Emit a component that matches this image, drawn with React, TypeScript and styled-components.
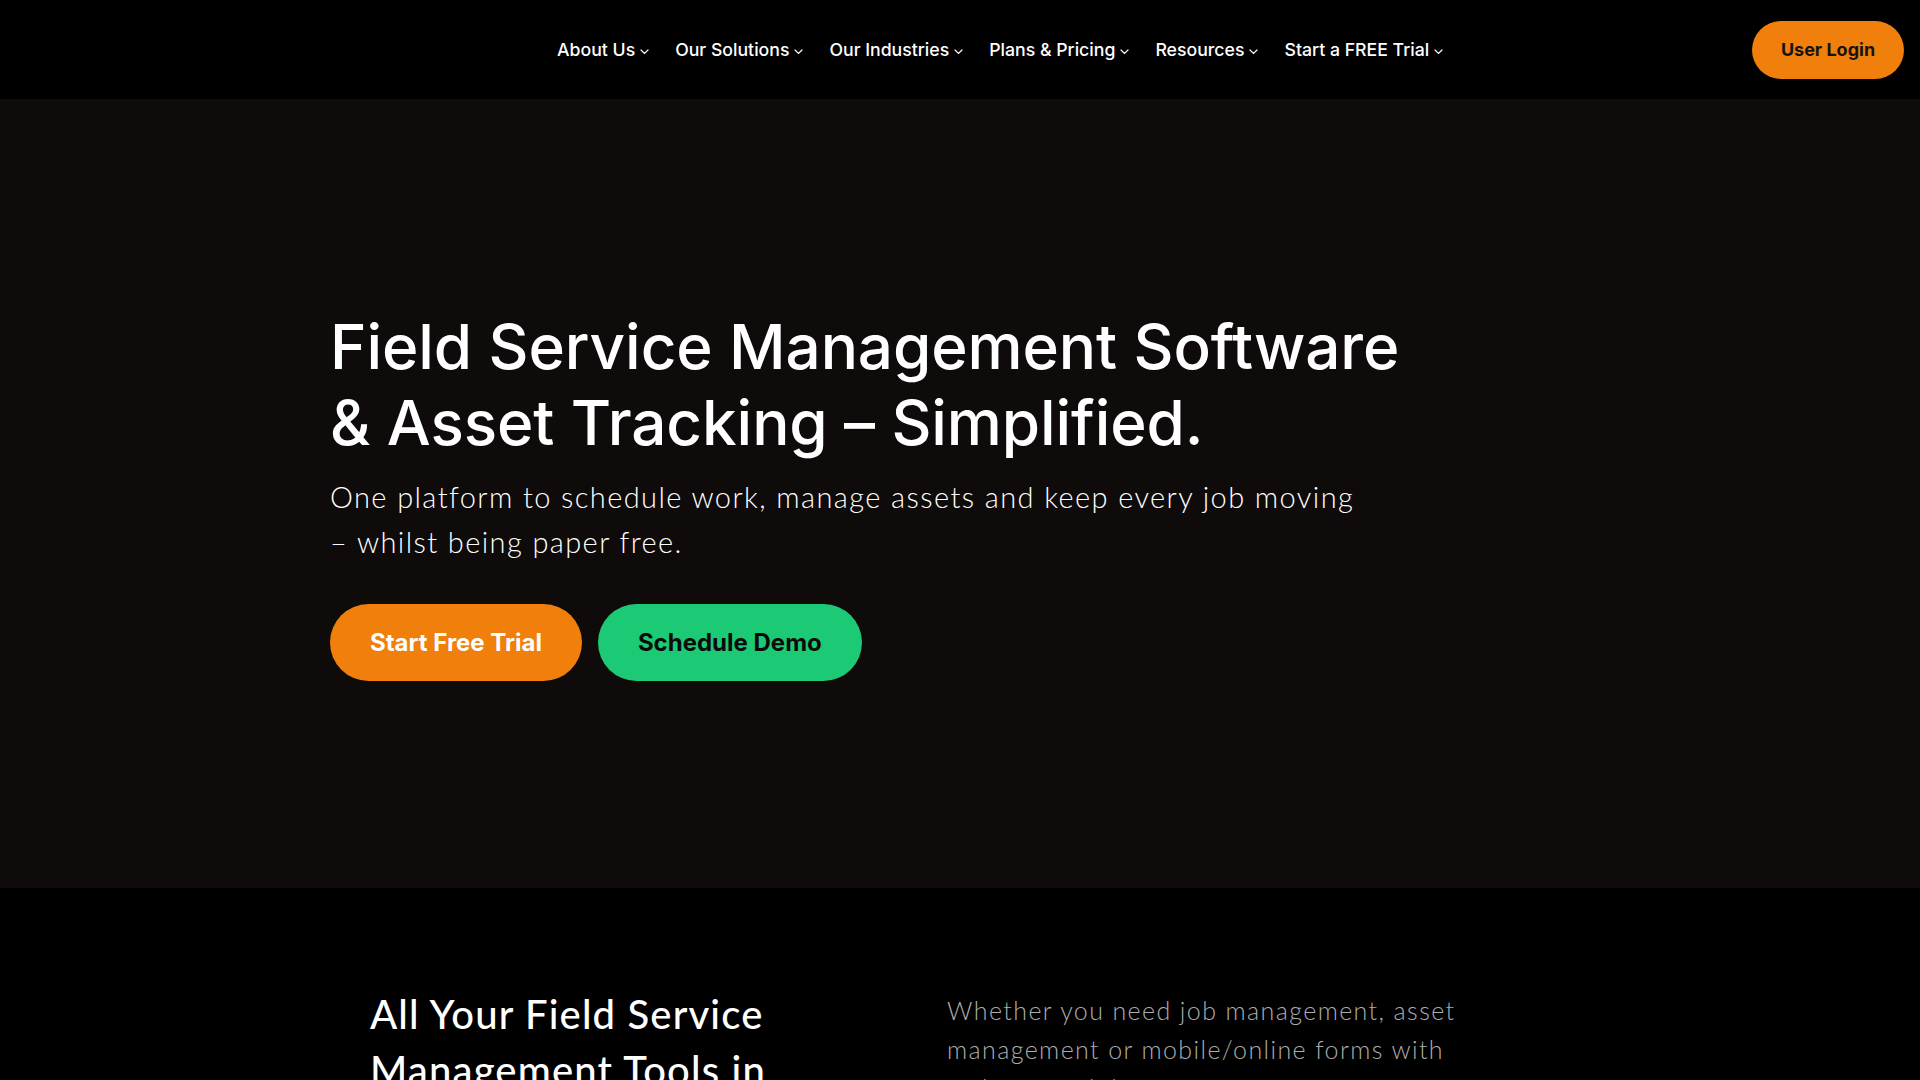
import * as React from "react";
import styled, { createGlobalStyle } from "styled-components";

const orange = "#f07f0c";
const green = "#1cc974";
const heroBg = "#0e0b0a";

const GlobalStyle = createGlobalStyle`
  html, body {
    margin: 0;
    padding: 0;
    background: #000;
  }
  body {
    font-family: Inter, "Liberation Sans", sans-serif;
    -webkit-font-smoothing: antialiased;
  }
  * {
    box-sizing: border-box;
  }
`;

const Header = styled.header`
  display: flex;
  align-items: center;
  height: 99px;
  padding: 0 16px 0 0;
  background: #000;
`;

const Brand = styled.div`
  width: 541px;
  height: 60px;
`;

const Menu = styled.nav`
  display: flex;
  align-items: center;
  gap: 26px;
  padding-left: 16px;
`;

const MenuItem = styled.a`
  display: flex;
  align-items: center;
  gap: 5px;
  color: #fff;
  font-size: 17.7px;
  font-weight: 500;
  text-decoration: none;
  white-space: nowrap;
  svg {
    margin-top: 5px;
  }
`;

const LoginButton = styled.a`
  margin-left: auto;
  display: flex;
  align-items: center;
  justify-content: center;
  width: 152px;
  height: 58px;
  border-radius: 29px;
  background: ${orange};
  color: #161311;
  font-size: 18px;
  font-weight: 700;
  text-decoration: none;
`;

const Hero = styled.section`
  background: ${heroBg};
  padding: 210px 0 207px;
`;

const Container = styled.div`
  width: 1260px;
  margin: 0 auto;
`;

const Title = styled.h1`
  margin: 0;
  color: #fff;
  font-size: 62px;
  line-height: 76px;
  font-weight: 500;
  letter-spacing: -0.1px;
`;

const Lead = styled.p`
  margin: 13px 0 0;
  width: 1050px;
  color: #fff;
  font-family: Lato, "Open Sans", sans-serif;
  font-size: 29px;
  line-height: 45px;
  font-weight: 300;
  letter-spacing: 1.4px;
`;

const Actions = styled.div`
  display: flex;
  gap: 16px;
  margin-top: 40px;
`;

const Pill = styled.a<{ $tone: "orange" | "green" }>`
  display: flex;
  align-items: center;
  justify-content: center;
  height: 77px;
  padding: 0 40px;
  border-radius: 39px;
  background: ${(p) => (p.$tone === "orange" ? orange : green)};
  color: ${(p) => (p.$tone === "orange" ? "#fff" : "#0b0b0b")};
  font-size: 24px;
  font-weight: 700;
  text-decoration: none;
`;

const Tools = styled.section`
  background: #000;
  padding: 98px 0 80px;
`;

const ToolsGrid = styled.div`
  display: grid;
  grid-template-columns: 513px 520px;
  column-gap: 64px;
  padding: 0 40px;
`;

const ToolsTitle = styled.h2`
  margin: 0;
  color: #fff;
  font-family: Lato, "Open Sans", sans-serif;
  font-size: 40px;
  line-height: 56px;
  font-weight: 500;
  letter-spacing: 1.15px;
  max-width: 440px;
`;

const ToolsText = styled.p`
  margin: 5px 0 0;
  width: 520px;
  color: #acacac;
  font-family: Lato, "Open Sans", sans-serif;
  font-size: 25px;
  line-height: 39px;
  font-weight: 300;
  letter-spacing: 1.4px;
`;

const Chevron = () => (
  <svg width="9" height="6" viewBox="0 0 9 6" fill="none">
    <path d="M1 1l3.5 3.5L8 1" stroke="#fff" strokeWidth="1.2" strokeLinecap="round" />
  </svg>
);

const menu = [
  "About Us",
  "Our Solutions",
  "Our Industries",
  "Plans & Pricing",
  "Resources",
  "Start a FREE Trial",
];

export default function App() {
  return (
    <>
      <GlobalStyle />
      <Header>
        <Brand />
        <Menu>
          {menu.map((label) => (
            <MenuItem key={label} href="#">
              {label}
              <Chevron />
            </MenuItem>
          ))}
        </Menu>
        <LoginButton href="#">User Login</LoginButton>
      </Header>
      <Hero>
        <Container>
          <Title>
            Field Service Management Software
            <br />& Asset Tracking – Simplified.
          </Title>
          <Lead>
            One platform to schedule work, manage assets and keep every job moving
            <br />– whilst being paper free.
          </Lead>
          <Actions>
            <Pill $tone="orange" href="#">
              Start Free Trial
            </Pill>
            <Pill $tone="green" href="#">
              Schedule Demo
            </Pill>
          </Actions>
        </Container>
      </Hero>
      <Tools>
        <Container>
          <ToolsGrid>
            <ToolsTitle>All Your Field Service Management Tools in One Place</ToolsTitle>
            <ToolsText>
              Whether you need job management, asset
              <br />
              management or mobile/online forms with
              <br />
              offline capability, our software gives your team everything it needs to work
              smarter in the field.
            </ToolsText>
          </ToolsGrid>
        </Container>
      </Tools>
    </>
  );
}
